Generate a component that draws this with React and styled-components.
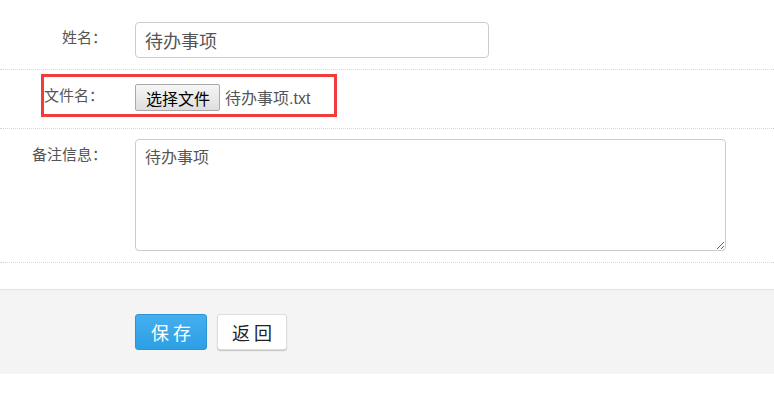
import styled, { createGlobalStyle } from 'styled-components'

const GlobalStyle = createGlobalStyle`
  html, body {
    margin: 0;
    padding: 0;
    background: #fff;
  }
  body {
    font-family: "Liberation Sans", "Noto Sans CJK SC", sans-serif;
    color: #555;
  }
`

const Form = styled.form`
  padding-top: 11px;
`

const Row = styled.div`
  display: flex;
  align-items: flex-start;
  padding: ${({ pad }) => pad || '11px 0'};
  border-bottom: 1px dotted #d6d6d6;
`

const Label = styled.label`
  flex: none;
  width: ${({ width }) => width || '107px'};
  margin-right: ${({ gap }) => gap || '28px'};
  padding-top: ${({ top }) => top || '4px'};
  text-align: ${({ align }) => align || 'right'};
  font-size: 15px;
  line-height: 24px;
  color: #555;
  white-space: nowrap;
`

const Highlight = styled.div`
  display: flex;
  align-items: center;
  margin-left: 41px;
  height: 37px;
  padding-right: 24px;
  border: 3px solid #f23b3b;
`

const TextInput = styled.input`
  box-sizing: border-box;
  width: 354px;
  height: 36px;
  padding: 0 9px;
  border: 1px solid #ccc;
  border-radius: 4px;
  font-family: inherit;
  font-size: 18px;
  color: #555;
  outline: none;
`

const FileButton = styled.button`
  box-sizing: border-box;
  height: 27px;
  padding: 0 9px 0 10px;
  margin-top: 4px;
  border: 1px solid #a9a9a9;
  border-radius: 2px;
  background: linear-gradient(#f6f6f6, #dedede);
  font-family: inherit;
  font-size: 16px;
  color: #000;
`

const FileName = styled.span`
  margin-left: 5px;
  margin-top: 2px;
  font-size: 16px;
  color: #555;
`

const TextArea = styled.textarea`
  box-sizing: border-box;
  width: 591px;
  height: 112px;
  padding: 7px 9px;
  border: 1px solid #ccc;
  border-radius: 4px;
  font-family: inherit;
  font-size: 16px;
  line-height: 22px;
  color: #555;
  outline: none;
  resize: vertical;
`

const Footer = styled.div`
  display: flex;
  gap: 10px;
  margin-top: 26px;
  padding: 24px 0 24px 135px;
  background: #f4f4f4;
  border-top: 1px solid #e3e3e3;
`

const Button = styled.button`
  box-sizing: border-box;
  height: 36px;
  width: ${({ primary }) => (primary ? '72px' : '70px')};
  padding: 0;
  border-radius: 3px;
  border: 1px solid ${({ primary }) => (primary ? '#2b93d6' : '#ddd')};
  background: ${({ primary }) =>
    primary ? 'linear-gradient(#45aff0, #2c9fe3)' : '#fff'};
  box-shadow: ${({ primary }) =>
    primary ? 'none' : '0 1px 1px rgba(0, 0, 0, 0.2)'};
  color: ${({ primary }) => (primary ? '#fff' : '#222')};
  font-family: inherit;
  font-size: 18px;
  letter-spacing: 4px;
  text-indent: 4px;
`

export default function App() {
  return (
    <>
      <GlobalStyle />
      <Form>
        <Row>
          <Label>姓名：</Label>
          <TextInput defaultValue="待办事项" />
        </Row>
        <Row pad="4px 0 11px">
          <Highlight>
            <Label width="63px" gap="28px" top="0" align="left">
              文件名：
            </Label>
            <FileButton type="button">选择文件</FileButton>
            <FileName>待办事项.txt</FileName>
          </Highlight>
        </Row>
        <Row pad="10px 0 11px">
          <Label>备注信息：</Label>
          <TextArea defaultValue="待办事项" />
        </Row>
        <Footer>
          <Button type="button" primary>
            保存
          </Button>
          <Button type="button">返回</Button>
        </Footer>
      </Form>
    </>
  )
}
